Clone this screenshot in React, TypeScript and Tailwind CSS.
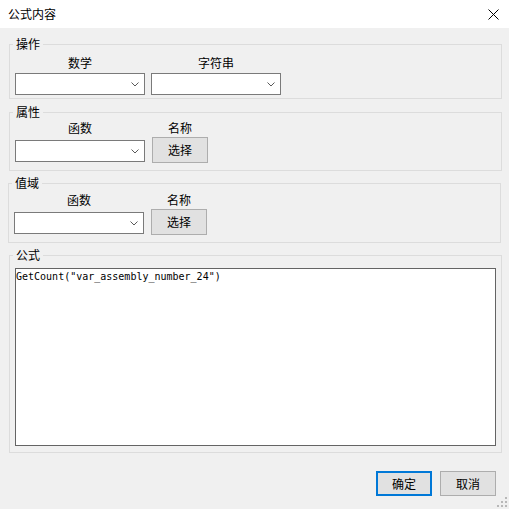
import React from "react";

const cjk = { fontFamily: '"Noto Sans CJK SC", "Noto Sans", sans-serif' };

function Chevron() {
  return (
    <svg width="8" height="5" viewBox="0 0 8 5" className="block">
      <polyline points="0.5,0.5 4,4 7.5,0.5" fill="none" stroke="#5a5a5a" strokeWidth="1" />
    </svg>
  );
}

function Combo() {
  return (
    <div className="w-[130px] h-[22px] bg-white border border-[#7a7a7a] flex items-center justify-end pr-[5px]">
      <Chevron />
    </div>
  );
}

function Btn({ label, primary = false, h = "h-[26px]" }: { label: string; primary?: boolean; h?: string }) {
  return (
    <button
      type="button"
      className={
        "w-[56px] " +
        h +
        " bg-[#e1e1e1] text-[12px] leading-[16px] text-black flex items-center justify-center " +
        (primary ? "border-2 border-[#0078d7]" : "border border-[#adadad]")
      }
    >
      {label}
    </button>
  );
}

function Group({
  title,
  className,
  children,
}: {
  title: string;
  className: string;
  children: React.ReactNode;
}) {
  return (
    <fieldset className={"border border-[#dcdcdc] w-[493px] " + className}>
      <legend className="ml-[3px] px-[3px] text-[12px] leading-[16px] text-black">{title}</legend>
      {children}
    </fieldset>
  );
}

function FuncRow({ top }: { top: string }) {
  return (
    <div className={"flex items-start px-[5px] pb-[7px] " + top}>
      <div className="w-[130px] flex flex-col items-center">
        <span className="text-[12px] leading-[16px]">函数</span>
        <div className="mt-[4px]">
          <Combo />
        </div>
      </div>
      <div className="ml-[7px] w-[56px] flex flex-col items-center">
        <span className="text-[12px] leading-[16px]">名称</span>
        <div className="mt-[1px]">
          <Btn label="选择" />
        </div>
      </div>
    </div>
  );
}

export default function App() {
  return (
    <div className="w-[509px] h-[509px] bg-[#f0f0f0] flex flex-col relative overflow-hidden text-black" style={cjk}>
      {/* title bar */}
      <div className="h-[28px] bg-white flex items-center justify-between pl-[8px] pr-[10px] shrink-0">
        <span className="text-[12px] leading-[16px]">公式内容</span>
        <svg width="11" height="11" viewBox="0 0 11 11" className="block">
          <path d="M0.5 0.5 L10.5 10.5 M10.5 0.5 L0.5 10.5" stroke="#000" strokeWidth="1" />
        </svg>
      </div>

      <Group title="操作" className="mt-[8px] ml-[9px]">
        <div className="flex gap-[6px] px-[5px] pt-[3px] pb-[3px]">
          <div className="w-[130px] flex flex-col items-center gap-[2px]">
            <span className="text-[12px] leading-[16px]">数学</span>
            <Combo />
          </div>
          <div className="w-[130px] flex flex-col items-center gap-[2px]">
            <span className="text-[12px] leading-[16px]">字符串</span>
            <Combo />
          </div>
        </div>
      </Group>

      <Group title="属性" className="mt-[5px] ml-[9px]">
        <FuncRow top="pt-0" />
      </Group>

      <Group title="值域" className="mt-[4px] ml-[8px]">
        <FuncRow top="pt-[1px]" />
      </Group>

      <Group title="公式" className="mt-[4px] ml-[9px]">
        <div className="px-[5px] pt-[5px] pb-[6px]">
          <textarea
            readOnly
            value={'GetCount("var_assembly_number_24")'}
            className="block w-full h-[178px] bg-white border border-[#646464] resize-none outline-none pl-[0px] pt-[1px] text-[10px] leading-[14px] text-black"
            style={{ fontFamily: '"DejaVu Sans Mono", "Liberation Mono", monospace' }}
          />
        </div>
      </Group>

      <div className="mt-[18px] flex justify-end gap-[8px] pr-[13px]">
        <Btn label="确定" primary h="h-[25px]" />
        <Btn label="取消" h="h-[25px]" />
      </div>

      {/* size grip */}
      <svg width="12" height="12" viewBox="0 0 12 12" className="absolute right-[1px] bottom-[1px]">
        <g fill="#b8b8b8">
          <rect x="9" y="1" width="2" height="2" />
          <rect x="5" y="5" width="2" height="2" />
          <rect x="9" y="5" width="2" height="2" />
          <rect x="1" y="9" width="2" height="2" />
          <rect x="5" y="9" width="2" height="2" />
          <rect x="9" y="9" width="2" height="2" />
        </g>
      </svg>
    </div>
  );
}
